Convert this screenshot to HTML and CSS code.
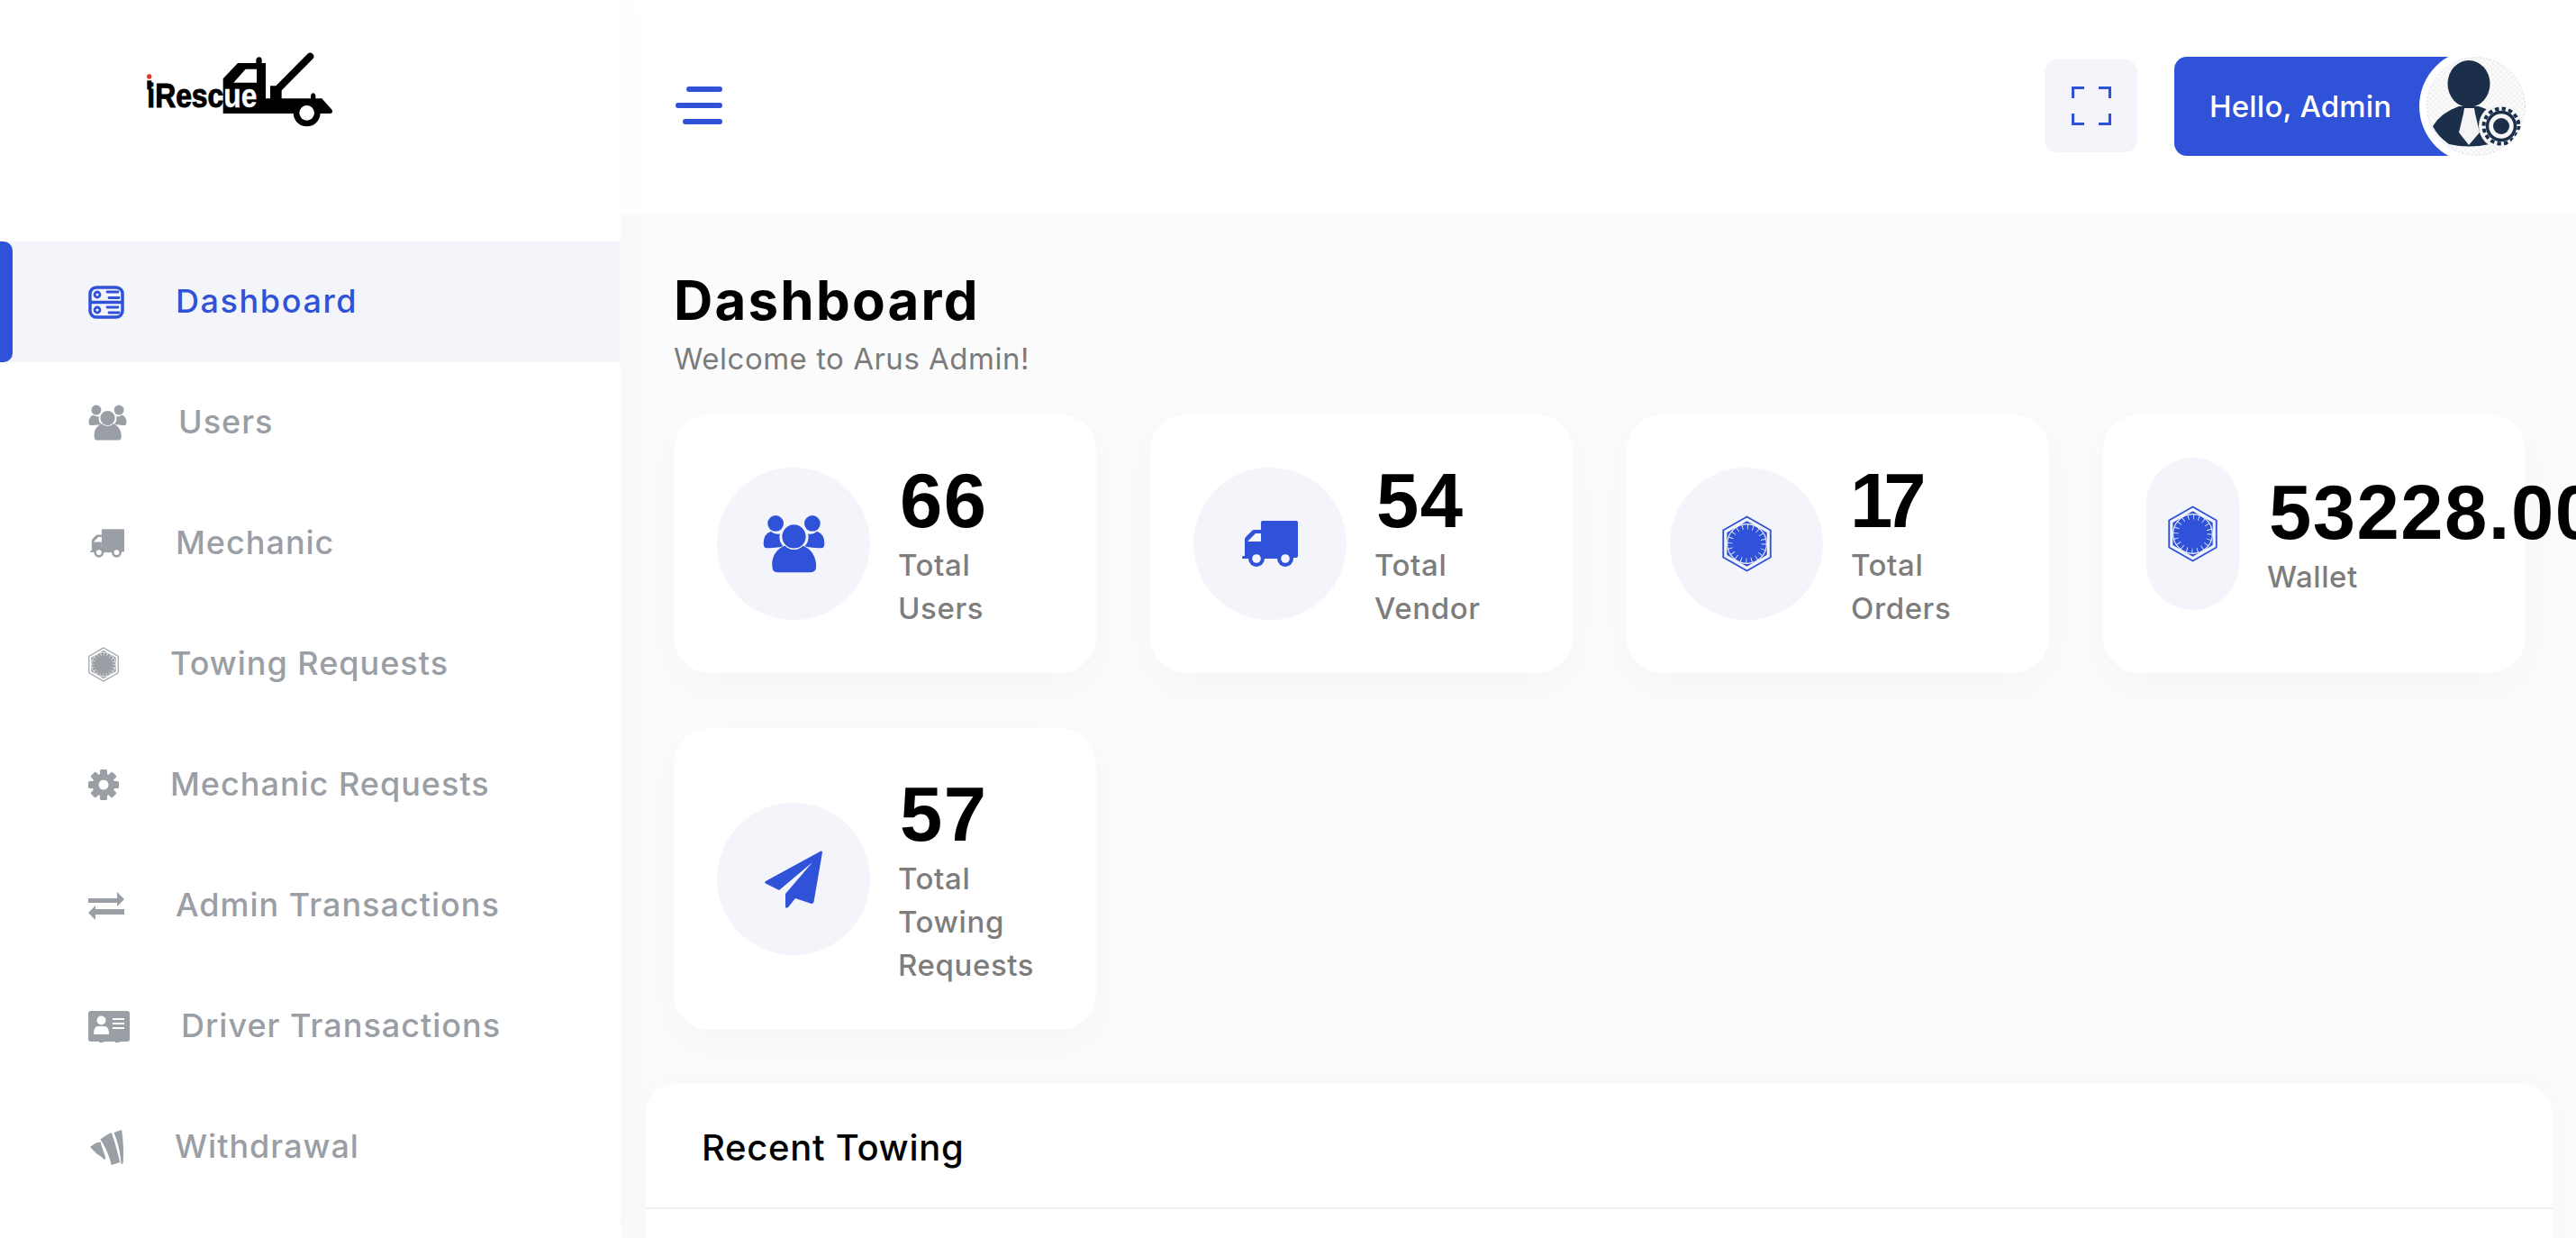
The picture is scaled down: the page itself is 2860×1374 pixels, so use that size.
FILE: index.html
```html
<!DOCTYPE html>
<html lang="en">
<head>
<meta charset="utf-8">
<title>Dashboard</title>
<link rel="stylesheet" href="styles.css">
</head>
<body>
<svg class="defs" aria-hidden="true">
  <symbol id="i-dash" viewBox="0 0 40 37">
    <rect x="2" y="2" width="36" height="33" rx="7" fill="none" stroke="currentColor" stroke-width="3.500"/>
    <path d="M2 18.500h36" stroke="currentColor" stroke-width="3.500"/>
    <circle cx="10" cy="10" r="3" fill="none" stroke="currentColor" stroke-width="2.800"/>
    <circle cx="10" cy="27" r="3" fill="none" stroke="currentColor" stroke-width="2.800"/>
    <path d="M21 7h12M23 13.500h11M21 24h12M23 30h11" stroke="currentColor" stroke-width="2.800" stroke-linecap="round"/>
  </symbol>
  <symbol id="i-users" viewBox="318 393 210 197">
    <circle cx="361" cy="423" r="27" fill="currentColor"/>
    <circle cx="485" cy="423" r="27" fill="currentColor"/>
    <path d="M345 450C352 458 368 460 376 458C372 475 376 490 388 500C375 503 365 506 330 506Q320 506 320 490Q320 460 345 450Z" fill="currentColor"/>
    <path d="M501 450C494 458 478 460 470 458C474 475 470 490 458 500C471 503 481 506 516 506Q526 506 526 490Q526 460 501 450Z" fill="currentColor"/>
    <circle class="halo-stroke" cx="423" cy="467" r="44" fill="currentColor" stroke-width="8"/>
    <path d="M350 570C345 525 375 503 393 498C410 516 436 516 453 498C475 505 500 530 498 570Q497 588 478 588L368 588Q350 588 350 570Z" fill="currentColor"/>
  </symbol>
  <symbol id="i-truck" viewBox="0 0 62 51">
    <path d="M21 2Q21 0 23 0H60Q62 0 62 2V39Q62 41 60 41H21Z" fill="currentColor"/>
    <path d="M21 10H14Q12 10 11 11L4 18Q3 19 3 21V39H1Q0 39 0 40.500Q0 42 1 42H21Z" fill="currentColor"/>
    <rect x="16" y="38" width="32" height="4" fill="currentColor"/>
    <path class="halo-fill" d="M6 23L15 14H21V23Z"/>
    <circle cx="16" cy="42" r="9" fill="currentColor"/>
    <circle cx="48" cy="42" r="9" fill="currentColor"/>
    <circle class="halo-fill" cx="16" cy="42" r="4.800"/>
    <circle class="halo-fill" cx="48" cy="42" r="4.800"/>
  </symbol>
  <symbol id="i-hex" viewBox="0 0 88 100">
    <path d="M44 2L86 26V74L44 98L2 74V26Z" fill="none" stroke="currentColor" stroke-width="3"/>
    <path d="M44 9.500L79.500 30V70L44 90.500L8.500 70V30Z" fill="currentColor"/>
    <circle class="halo-stroke" cx="44" cy="50" r="35" fill="none" stroke-width="1.800"/>
    <circle class="halo-stroke" cx="44" cy="50" r="30" fill="none" stroke-width="9" stroke-dasharray="1.300 8.125"/>
  </symbol>
  <symbol id="i-gear" viewBox="0 0 34 34">
    <g fill="currentColor">
      <rect x="13" y="0" width="8" height="34" rx="1.500"/>
      <rect x="13" y="0" width="8" height="34" rx="1.500" transform="rotate(45 17 17)"/>
      <rect x="13" y="0" width="8" height="34" rx="1.500" transform="rotate(90 17 17)"/>
      <rect x="13" y="0" width="8" height="34" rx="1.500" transform="rotate(135 17 17)"/>
      <circle cx="17" cy="17" r="12.500"/>
    </g>
    <circle class="halo-fill" cx="17" cy="17" r="5.500"/>
  </symbol>
  <symbol id="i-arrows" viewBox="0 0 40 31">
    <path d="M0 7H32V0L40 8L32 16V12H0ZM40 19H8V15L0 23L8 31V25H40Z" fill="currentColor"/>
  </symbol>
  <symbol id="i-id" viewBox="0 0 46 35">
    <rect width="46" height="34" rx="3" fill="currentColor"/>
    <rect x="12" y="33" width="5" height="2" fill="currentColor"/>
    <rect x="30" y="33" width="5" height="2" fill="currentColor"/>
    <circle class="halo-fill" cx="14.500" cy="10.500" r="5"/>
    <path class="halo-fill" d="M6 26Q6 17 11 17H18Q23 17 23 26Z"/>
    <path class="halo-stroke" d="M27 9H40M27 14H40M27 19H40" stroke-width="2.200" fill="none"/>
  </symbol>
  <symbol id="i-w" viewBox="0 0 40 41">
    <path d="M1 20Q7 15 13 14L19 32Q19 36 17 34Q12 29 9 28Z" fill="currentColor"/>
    <path d="M13 11Q19 6 26 3Q32 20 36 38L26 41Q22 24 13 11Z" fill="currentColor"/>
    <path d="M29 3Q34 1 38 0Q41 20 39.500 39L37.500 40Q36 20 29 3Z" fill="currentColor"/>
  </symbol>
  <symbol id="i-plane" viewBox="0 0 64 64">
    <path d="M62.500.5L1 34Q-1 36 2 37L16 44L53 13L23 48V62Q23 65 26 63L34 53L52 59Q54 59 54.500 57L64 2Q64 0 62.500.5Z" fill="currentColor"/>
  </symbol>
</svg>

<div class="app">
  <aside class="sidebar">
    <div class="logo">
      <svg class="logo-art" viewBox="0 0 900 390" role="img" aria-label="iRescue logo">
        <path d="M443 288V172L492 120H553V108Q555 100 563 100Q571 100 572 108V120H585V238H600V196H638V238H735V228Q736 220 743 220Q750 220 751 228V238H772L806 276Q810 288 798 288Z" fill="#000"/>
        <path d="M478 185L518 140H555V185Z" fill="#fff"/>
        <path d="M620 212L733 98" stroke="#000" stroke-width="24" stroke-linecap="round"/>
        <circle cx="722" cy="286" r="45" fill="#000"/>
        <circle cx="722" cy="286" r="25" fill="#fff"/>
        <text class="logo-text" x="190" y="268" textLength="366" lengthAdjust="spacingAndGlyphs">iResc<tspan class="logo-white">ue</tspan></text>
        <rect x="190" y="178" width="15" height="30" fill="#000"/>
        <circle cx="197" cy="165" r="8" fill="#e8322c"/>
      </svg>
    </div>
    <nav class="menu">
      <a class="item active"><svg class="ic w40 h37"><use href="#i-dash"/></svg><span>Dashboard</span></a>
      <a class="item"><svg class="ic w43 h40"><use href="#i-users"/></svg><span>Users</span></a>
      <a class="item"><svg class="ic w38 h32 ml2"><use href="#i-truck"/></svg><span>Mechanic</span></a>
      <a class="item"><svg class="ic w34 h39"><use href="#i-hex"/></svg><span>Towing Requests</span></a>
      <a class="item"><svg class="ic w34 h34"><use href="#i-gear"/></svg><span>Mechanic Requests</span></a>
      <a class="item"><svg class="ic w40 h31"><use href="#i-arrows"/></svg><span>Admin Transactions</span></a>
      <a class="item"><svg class="ic w46 h35"><use href="#i-id"/></svg><span>Driver Transactions</span></a>
      <a class="item"><svg class="ic w38 h41 ml1"><use href="#i-w"/></svg><span>Withdrawal</span></a>
    </nav>
  </aside>

  <div class="main">
    <header class="topbar">
      <button class="burger" aria-label="Menu"><i class="b1"></i><i class="b2"></i><i class="b3"></i></button>
      <div class="top-right">
        <button class="full" aria-label="Fullscreen">
          <svg class="full-ic" viewBox="0 0 44 43"><path d="M1.500 13V1.500H14M30 1.500H42.500V13M42.500 30V41.500H30M14 41.500H1.500V30" fill="none" stroke="currentColor" stroke-width="3.200"/></svg>
        </button>
        <div class="profile">
          <span class="hello">Hello, Admin</span>
          <svg class="avatar" viewBox="0 0 110 110" role="img" aria-label="Admin avatar">
            <defs>
              <pattern id="chk" width="6" height="6" patternUnits="userSpaceOnUse">
                <rect width="6" height="6" fill="#fcfcfc"/><rect width="3" height="3" fill="#f3f3f3"/><rect x="3" y="3" width="3" height="3" fill="#f3f3f3"/>
              </pattern>
            </defs>
            <circle cx="55" cy="55" r="54.500" fill="url(#chk)" stroke="#cfd6f5" stroke-width="1" stroke-dasharray="2 2"/>
            <path d="M7 77Q16 62 36 55H58Q76 60 88 76Q82 92 70 97Q47 102 25 97Q12 88 7 77Z" fill="#1b2f4b"/>
            <ellipse cx="47" cy="30" rx="23.500" ry="26" fill="#1b2f4b"/>
            <path d="M42 57H53L54 63L59 84L47 98L36 84L41 63Z" fill="#f4f4f4"/>
            <circle cx="83" cy="77" r="25" fill="#f6f6f6"/>
            <circle cx="83" cy="77" r="19.500" fill="none" stroke="#1b2f4b" stroke-width="4" stroke-dasharray="4.400 3.260"/>
            <circle cx="83" cy="77" r="15.500" fill="none" stroke="#1b2f4b" stroke-width="3.500"/>
            <circle cx="83" cy="77" r="9" fill="#1b2f4b"/>
          </svg>
        </div>
      </div>
    </header>

    <main class="content">
      <div class="page-head">
        <h1>Dashboard</h1>
        <p>Welcome to Arus Admin!</p>
      </div>
      <section class="stats">
        <article class="card">
          <div class="card-row">
            <div class="card-ic"><svg class="ic w69 h65"><use href="#i-users"/></svg></div>
            <div class="card-txt"><div class="num">66</div><div class="label">Total Users</div></div>
          </div>
        </article>
        <article class="card">
          <div class="card-row">
            <div class="card-ic"><svg class="ic w62 h51"><use href="#i-truck"/></svg></div>
            <div class="card-txt"><div class="num">54</div><div class="label">Total Vendor</div></div>
          </div>
        </article>
        <article class="card">
          <div class="card-row">
            <div class="card-ic"><svg class="ic w55 h63"><use href="#i-hex"/></svg></div>
            <div class="card-txt"><div class="num num-tight">17</div><div class="label">Total Orders</div></div>
          </div>
        </article>
        <article class="card">
          <div class="card-row">
            <div class="card-ic"><svg class="ic w55 h63"><use href="#i-hex"/></svg></div>
            <div class="card-txt"><div class="num">53228.00</div><div class="label">Wallet</div></div>
          </div>
        </article>
        <article class="card">
          <div class="card-row">
            <div class="card-ic"><svg class="ic w64 h64"><use href="#i-plane"/></svg></div>
            <div class="card-txt"><div class="num">57</div><div class="label">Total Towing Requests</div></div>
          </div>
        </article>
      </section>
      <section class="panel">
        <div class="panel-head"><h2>Recent Towing</h2></div>
        <div class="panel-body"></div>
      </section>
    </main>
  </div>
</div>
</body>
</html>
```
FILE: styles.css
```css
:root {
  --blue: #2f52d8;
  --tint: #f4f5fb;
  --grey: #9a9ea5;
  --ui: "Inter", "Noto Sans", "Liberation Sans", sans-serif;
}
* { box-sizing: border-box; }
html, body { height: 100%; }
body {
  margin: 0;
  overflow: hidden;
  background: #fbfbfb;
  color: #000;
  font-family: var(--ui);
}
.defs { display: none; }
.halo-fill { fill: var(--halo); }
.halo-stroke { stroke: var(--halo); }

.app { display: flex; height: 1374px; overflow: hidden; }

/* sidebar */
.sidebar {
  flex: 0 0 689px;
  background: #fff;
  box-shadow: 0 0 50px rgba(0, 0, 0, .025);
  position: relative;
  z-index: 2;
  --halo: #fff;
}
.logo { height: 268px; padding: 30px 0 0 100px; }
.logo-art { display: block; width: 300px; height: 130px; }
.logo-text {
  font-family: "Liberation Sans", sans-serif;
  font-weight: 700;
  font-size: 108px;
  fill: #000;
  stroke: #000;
  stroke-width: 3px;
}
.logo-white { fill: #fff; stroke: #fff; stroke-width: 1px; }

.item {
  height: 134px;
  display: flex;
  align-items: center;
  gap: 57px;
  padding-left: 98px;
  color: var(--grey);
  font-size: 36px;
  font-weight: 500;
  letter-spacing: 1px;
  position: relative;
}
.item span { margin-bottom: 2px; }
.item.active { background: var(--tint); color: var(--blue); --halo: var(--tint); letter-spacing: 1.6px; }
.item.active::before {
  content: "";
  position: absolute;
  left: 0; top: 0; bottom: 0;
  width: 14px;
  background: var(--blue);
  border-radius: 0 10px 10px 0;
}

.ic { display: block; flex: none; }
.w34 { width: 34px; } .w38 { width: 38px; } .w40 { width: 40px; } .w43 { width: 43px; }
.w46 { width: 46px; } .w55 { width: 55px; } .w62 { width: 62px; } .w64 { width: 64px; } .w69 { width: 69px; }
.h31 { height: 31px; } .h32 { height: 32px; } .h34 { height: 34px; } .h35 { height: 35px; } .h37 { height: 37px; }
.h39 { height: 39px; } .h40 { height: 40px; } .h41 { height: 41px; } .h51 { height: 51px; } .h63 { height: 63px; }
.h64 { height: 64px; } .h65 { height: 65px; }
.ml1 { margin-left: 1px; } .ml2 { margin-left: 2px; }

/* main column */
.main { flex: 1; min-width: 0; display: flex; flex-direction: column; }
.topbar {
  flex: 0 0 238px;
  background: #fff;
  display: flex;
  align-items: center;
  justify-content: space-between;
  padding: 0 56px 2px 61px;
}
.burger {
  width: 52px;
  padding: 0;
  margin-bottom: 3px;
  border: 0;
  background: none;
  display: flex;
  flex-direction: column;
  align-items: flex-end;
  gap: 12px;
}
.burger i { display: block; height: 6px; border-radius: 3px; background: var(--blue); }
.b1 { width: 40px; } .b2 { width: 52px; } .b3 { width: 44px; }

.top-right { display: flex; align-items: center; gap: 41px; }
.full {
  width: 103px;
  height: 103px;
  padding: 0;
  margin-bottom: 1px;
  border: 0;
  border-radius: 14px;
  background: var(--tint);
  color: var(--blue);
  display: flex;
  align-items: center;
  justify-content: center;
}
.full-ic { width: 44px; height: 43px; display: block; }
.profile { display: flex; align-items: center; }
.hello {
  width: 335px;
  height: 110px;
  display: flex;
  align-items: center;
  padding-left: 39px;
  background: var(--blue);
  border-radius: 14px 0 0 14px;
  color: #fff;
  font-size: 33px;
  font-weight: 500;
  letter-spacing: .2px;
}
.avatar {
  width: 110px;
  height: 110px;
  margin-left: -55px;
  border-radius: 50%;
  background: #fff;
  box-shadow: 0 0 0 8px #fff;
  position: relative;
  display: block;
}

/* content */
.content { flex: 1; padding: 59px 26px 0 28px; min-height: 0; }
.page-head { margin: 0 29px 38px 31px; }
.page-head h1 { margin: 0; font-size: 60px; line-height: 72px; font-weight: 700; letter-spacing: 2.2px; }
.page-head p { margin: 5px 0 0; font-size: 33px; line-height: 48px; color: #7b7b7b; font-weight: 400; letter-spacing: .5px; }

.stats {
  margin: 0 30px 0 31px;
  display: grid;
  grid-template-columns: repeat(4, 469px);
  gap: 61px 60px;
}
.card {
  background: #fff;
  border-radius: 40px;
  padding: 48px;
  box-shadow: 0 14px 44px rgba(0, 0, 0, .025);
  min-width: 0;
}
.card-row { display: flex; align-items: center; gap: 31px; }
.card-ic {
  flex: 0 1 170px;
  min-width: 103px;
  height: 169px;
  border-radius: 85px;
  background: var(--tint);
  color: var(--blue);
  --halo: var(--tint);
  display: flex;
  align-items: center;
  justify-content: center;
}
.card-txt { flex: 0 1 170px; }
.num {
  font-family: "Liberation Sans", sans-serif;
  font-size: 85px;
  line-height: 95px;
  font-weight: 700;
  white-space: nowrap;
  padding-left: 2px;
  letter-spacing: 1.5px;
}
.num-tight { letter-spacing: -10px; margin-left: -3px; }
.label { font-size: 33px; line-height: 48px; font-weight: 500; color: #7d7d7d; letter-spacing: .6px; }

.panel {
  margin-top: 60px;
  background: #fff;
  border-radius: 33px 33px 0 0;
  box-shadow: 0 0 40px rgba(0, 0, 0, .02);
}
.panel-head { height: 139px; padding: 4px 62px 0; display: flex; align-items: center; border-bottom: 2px solid #eeeff4; }
.panel-head h2 { margin: 0; font-size: 40px; font-weight: 500; line-height: 1.2; letter-spacing: .7px; }
.panel-body { height: 60px; }
```
